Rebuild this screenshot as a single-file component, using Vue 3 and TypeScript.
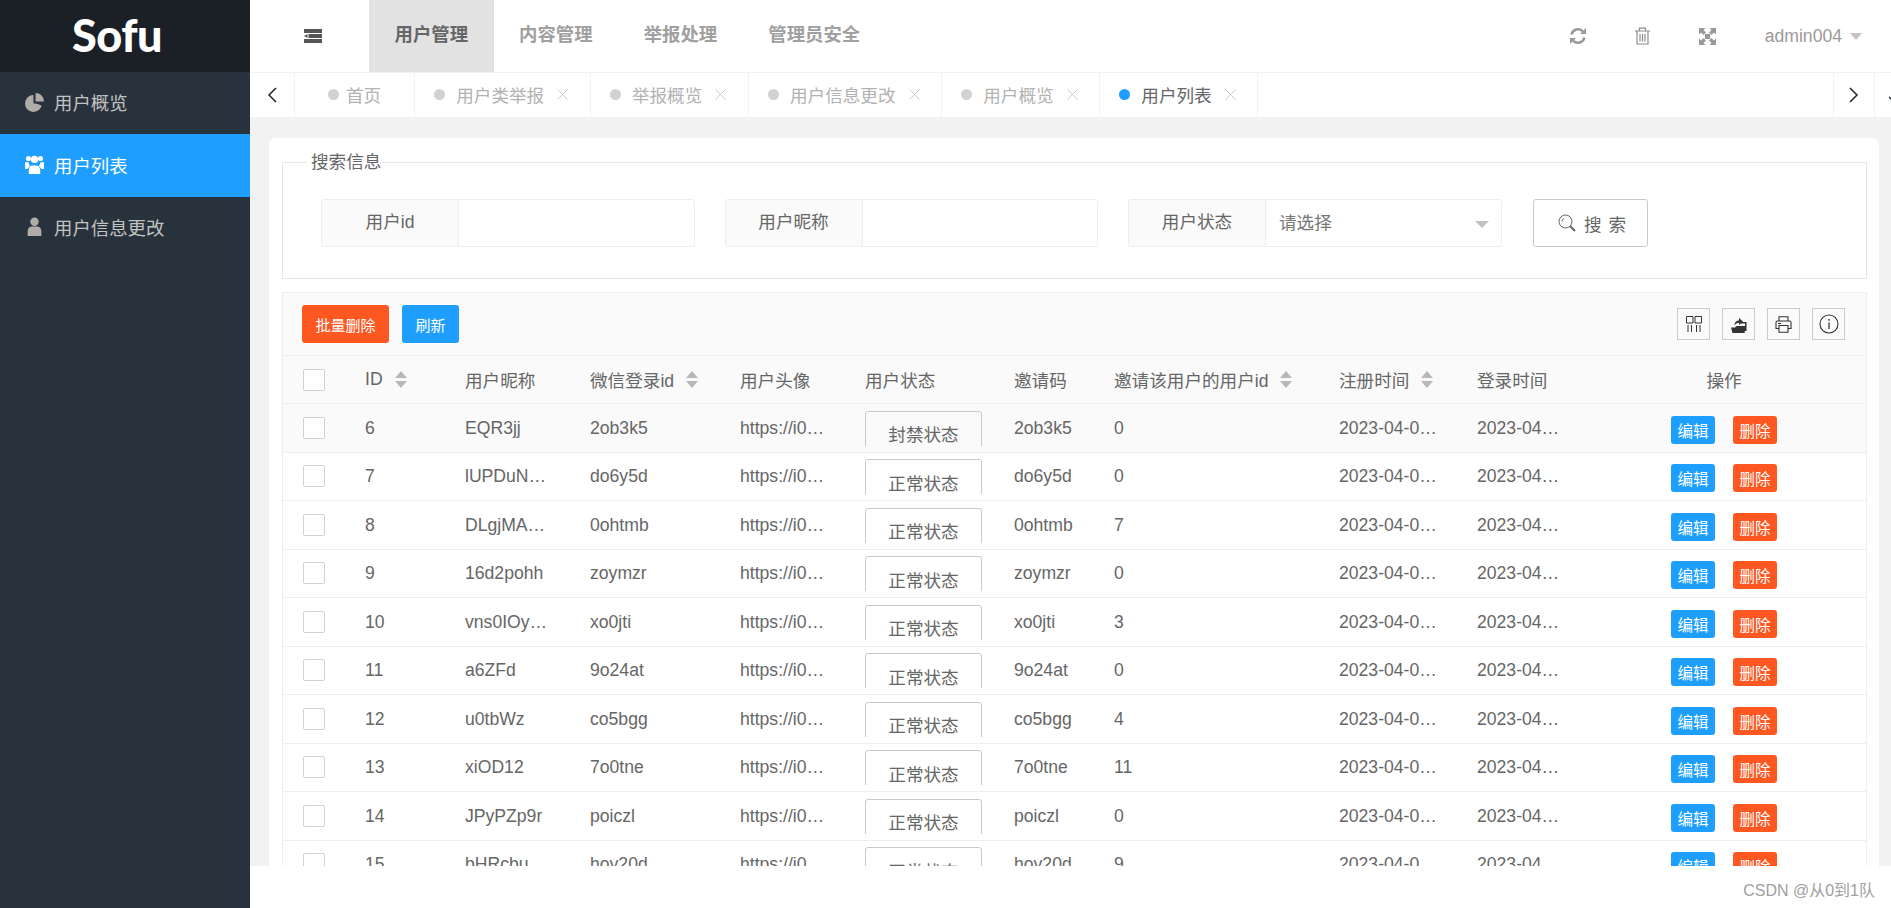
<script setup lang="ts">
interface Row { id: number; nick: string; wx: string; code: string; inviter: string; status: string }
const rows: Row[] = [
  { id: 6, nick: 'EQR3jj', wx: '2ob3k5', code: '2ob3k5', inviter: '0', status: '封禁状态' },
  { id: 7, nick: 'lUPDuNxkQ2', wx: 'do6y5d', code: 'do6y5d', inviter: '0', status: '正常状态' },
  { id: 8, nick: 'DLgjMAz7Rt', wx: '0ohtmb', code: '0ohtmb', inviter: '7', status: '正常状态' },
  { id: 9, nick: '16d2pohh', wx: 'zoymzr', code: 'zoymzr', inviter: '0', status: '正常状态' },
  { id: 10, nick: 'vns0IOyTfa', wx: 'xo0jti', code: 'xo0jti', inviter: '3', status: '正常状态' },
  { id: 11, nick: 'a6ZFd', wx: '9o24at', code: '9o24at', inviter: '0', status: '正常状态' },
  { id: 12, nick: 'u0tbWz', wx: 'co5bgg', code: 'co5bgg', inviter: '4', status: '正常状态' },
  { id: 13, nick: 'xiOD12', wx: '7o0tne', code: '7o0tne', inviter: '11', status: '正常状态' },
  { id: 14, nick: 'JPyPZp9r', wx: 'poiczl', code: 'poiczl', inviter: '0', status: '正常状态' },
  { id: 15, nick: 'bHRcbu', wx: 'hoy20d', code: 'hoy20d', inviter: '9', status: '正常状态' }
]
const navs = ['用户管理', '内容管理', '举报处理', '管理员安全']
const tabs = ['用户类举报', '举报概览', '用户信息更改', '用户概览', '用户列表']
const avatar = 'https://i0.hdslb.com/bfs/face/member.jpg'
const stamp = '2023-04-01 12:30:45'
</script>

<template>
  <div class="app">
    <aside class="side">
      <div class="logo">Sofu</div>
      <nav class="menu">
        <a class="item">
          <svg class="mi" viewBox="0 0 18 18"><path d="M8 2a8 8 0 1 0 8 8H8z" /><path d="M10 0a8 8 0 0 1 8 8h-8z" /><path d="M9.500 9.500h7.500l-.6 2.600z" fill="#28323d" /></svg>
          用户概览
        </a>
        <a class="item active">
          <svg class="mi" viewBox="0 0 18 18"><circle cx="3.300" cy="3.400" r="2.400" /><circle cx="14.700" cy="3.400" r="2.400" /><circle cx="9" cy="4.200" r="3.400" /><path d="M0 6.800h3.400c.1 1.700.7 2.900 1.800 3.800-1.400.6-2.200 1.500-2.600 2.600H0zM18 6.800h-3.400c-.1 1.700-.7 2.900-1.800 3.800 1.400.6 2.200 1.500 2.600 2.600H18z" /><path d="M3.600 18v-3.400C3.600 12 5.400 10 7 10h4c1.600 0 3.400 2 3.400 4.600V18z" /></svg>
          用户列表
        </a>
        <a class="item">
          <svg class="mi" viewBox="0 0 18 18"><circle cx="9" cy="4.500" r="4" /><path d="M2.500 18v-4.500C2.500 10.800 4.500 9 6 9h6c1.500 0 3.500 1.800 3.500 4.500V18z" /></svg>
          用户信息更改
        </a>
      </nav>
    </aside>

    <div class="main">
      <header class="top">
        <div class="toggle">
          <svg width="18" height="14" viewBox="0 0 18 14" fill="#555"><path d="M0 0h18v4H0zM0 10h18v4H0zM4.500 5h13.500v4H4.500zM0 7l3.500-2v4z" /></svg>
        </div>
        <a v-for="(n, i) in navs" :key="n" class="nav" :class="{ on: i === 0 }">{{ n }}</a>
        <div class="tools">
          <span class="tool">
            <svg width="18" height="18" viewBox="0 0 18 18" fill="none" stroke="#999" stroke-width="2.600"><path d="M2.500 7.500A6.800 6.800 0 0 1 14 4.300" /><path d="M15.500 10.500A6.800 6.800 0 0 1 4 13.700" /><path d="M17 1v6h-6z" fill="#999" stroke="none" /><path d="M1 17v-6h6z" fill="#999" stroke="none" /></svg>
          </span>
          <span class="tool">
            <svg width="15" height="18" viewBox="0 0 15 18" fill="none" stroke="#8e8e8e" stroke-width="1.200"><path d="M0 4h15M4.500 4V1.200h6V4M2 4v13h11V4M5 7v7.500M7.500 7v7.500M10 7v7.500" /></svg>
          </span>
          <span class="tool">
            <svg width="17" height="17" viewBox="0 0 17 17" fill="#999"><path d="M0 0h6.500L4.500 2 7 4.500 4.500 7 2 4.500 0 6.500zM17 0v6.500l-2-2L12.500 7 10 4.500 12.500 2l-2-2zM0 17v-6.500l2 2L4.500 10 7 12.500 4.500 15l2 2zM17 17h-6.500l2-2L10 12.500l2.500-2.500 2.500 2.500 2-2z" /><path d="M6 6h5v5H6z" /></svg>
          </span>
          <span class="user">admin004<i class="caret" /></span>
        </div>
      </header>

      <div class="tabs">
        <button class="arrow">
          <svg width="10" height="16" viewBox="0 0 10 16" fill="none" stroke="#1c2530" stroke-width="1.500"><path d="M9 1 2 8l7 7" /></svg>
        </button>
        <div class="strip">
          <div class="tab home"><i class="dot" /><span>首页</span></div>
          <div v-for="(t, i) in tabs" :key="t" class="tab" :class="{ cur: i === tabs.length - 1 }">
            <i class="dot" /><span>{{ t }}</span>
            <svg class="close" width="11" height="11" viewBox="0 0 11 11" stroke="#c9c9c9" stroke-width="1"><path d="M.5.5l10 10M10.500.5l-10 10" /></svg>
          </div>
        </div>
        <button class="arrow right">
          <svg width="10" height="16" viewBox="0 0 10 16" fill="none" stroke="#1c2530" stroke-width="1.500"><path d="M1 1l7 7-7 7" /></svg>
        </button>
        <div class="more">
          <svg width="10" height="8" viewBox="0 0 10 8" fill="none" stroke="#1c2530" stroke-width="1.500"><path d="M0 1l5 5 5-5" /></svg>
        </div>
      </div>

      <div class="body">
        <section class="card">
          <fieldset class="search">
            <legend>搜索信息</legend>
            <div class="form">
              <div class="group"><label>用户id</label><div class="field" /></div>
              <div class="group"><label>用户昵称</label><div class="field" /></div>
              <div class="group">
                <label>用户状态</label>
                <div class="field select">请选择<i class="sel-caret" /></div>
              </div>
              <button class="go">
                <svg width="18" height="18" viewBox="0 0 18 18" fill="none" stroke="#666" stroke-width="1"><circle cx="7.500" cy="7.500" r="6.500" /><path d="M4 7.500a3.500 3.500 0 0 1 2-3.200" /><path d="M12 12l5 5" stroke-width="2" /></svg>
                <span>搜 索</span>
              </button>
            </div>
          </fieldset>

          <div class="table">
            <div class="bar">
              <button class="btn red big">批量删除</button>
              <button class="btn blue big">刷新</button>
              <div class="bar-tools">
                <span class="ib">
                  <svg width="16" height="16" viewBox="0 0 16 16" fill="none" stroke="#333" stroke-width="1"><path d="M.5.5h6.500v6.500H.5zM9 .5h6.500v6.500H9zM2 9v7M5.500 9v7M10.500 9v7M14 9v7" /></svg>
                </span>
                <span class="ib">
                  <svg width="16" height="17" viewBox="0 0 16 17" fill="#333"><path d="M0 11.500h4l1.500-1.500H15l-1.500 7H1.500z" /><path d="M9 6h6.500v9H14V7.500H9z" /><path d="M3.500 9.500C3.500 6 5.500 4.500 8 4.500V2l4 3.500-4 3.500V6.700c-2 0-3.300.8-4.500 2.800z" /></svg>
                </span>
                <span class="ib">
                  <svg width="17" height="17" viewBox="0 0 17 17" fill="none" stroke="#333" stroke-width="1.100"><path d="M4 5V.8h9V5M4 12.500H1V6.500q0-1.500 1.500-1.500h12q1.500 0 1.500 1.500v6h-3" /><path d="M4 9.500h9v6.700H4z" /><path d="M3 7.500h3" /></svg>
                </span>
                <span class="ib">
                  <svg width="20" height="20" viewBox="0 0 20 20" fill="none" stroke="#333" stroke-width="1.100"><circle cx="10" cy="10" r="9" /><path d="M10 8.500V15" stroke-width="1.300" /><circle cx="10" cy="5.800" r=".9" fill="#333" stroke="none" /></svg>
                </span>
              </div>
            </div>

            <div class="row head">
              <div class="c chk"><i class="box" /></div>
              <div class="c">ID<i class="sort" /></div>
              <div class="c">用户昵称</div>
              <div class="c">微信登录id<i class="sort" /></div>
              <div class="c">用户头像</div>
              <div class="c">用户状态</div>
              <div class="c">邀请码</div>
              <div class="c">邀请该用户的用户id<i class="sort" /></div>
              <div class="c">注册时间<i class="sort" /></div>
              <div class="c">登录时间</div>
              <div class="c ops">操作</div>
            </div>

            <div v-for="(r, i) in rows" :key="r.id" class="row" :class="{ hover: i === 0 }">
              <div class="c chk"><i class="box" /></div>
              <div class="c">{{ r.id }}</div>
              <div class="c"><span class="t w-nick">{{ r.nick }}</span></div>
              <div class="c">{{ r.wx }}</div>
              <div class="c"><span class="t w-url">{{ avatar }}</span></div>
              <div class="c stat"><div class="clip"><button class="state">{{ r.status }}</button></div></div>
              <div class="c">{{ r.code }}</div>
              <div class="c">{{ r.inviter }}</div>
              <div class="c"><span class="t w-reg">{{ stamp }}</span></div>
              <div class="c"><span class="t w-log">{{ stamp }}</span></div>
              <div class="c ops">
                <button class="btn blue small">编辑</button>
                <button class="btn red small">删除</button>
              </div>
            </div>
          </div>
        </section>
      </div>

      <footer class="foot">CSDN @从0到1队</footer>
    </div>
  </div>
</template>

<style>
html, body { margin: 0; background: #fff; }
</style>

<style scoped>
.app {
  display: flex;
  height: 908px;
  overflow: hidden;
  font-family: "Liberation Sans", "Noto Sans CJK SC", sans-serif;
  font-size: 17.6px;
  color: #666;
}
button { font-family: inherit; cursor: pointer; }
i { font-style: normal; display: block; }

.side { width: 250px; flex: none; background: #28323d; }
.logo {
  height: 72px;
  padding-left: 72px;
  box-sizing: border-box;
  background: #1b2027;
  color: #fff;
  font-family: Lato, sans-serif;
  font-weight: 900;
  font-size: 45px;
  letter-spacing: -0.5px;
  line-height: 70px;
}
.item {
  display: flex;
  align-items: center;
  height: 62.4px;
  box-sizing: border-box;
  padding: 0 0 2px 25px;
  color: #c2c2c2;
  font-size: 18.4px;
}
.item.active { background: #1e9fff; color: #fff; }
.mi { width: 19px; height: 19px; margin-right: 10px; fill: #b0aca8; flex: none; }
.active .mi { fill: #fff; }

.main { flex: 1; min-width: 0; display: flex; flex-direction: column; }
.top {
  height: 73px;
  box-sizing: border-box;
  display: flex;
  border-bottom: 1px solid #f2f2f2;
  flex: none;
}
.toggle { width: 119px; display: flex; align-items: center; justify-content: center; padding-left: 6px; box-sizing: border-box; }
.nav {
  padding: 0 25.5px;
  line-height: 69px;
  font-size: 18.4px;
  font-weight: 700;
  color: #a0a0a0;
}
.nav.on { background: #e2e2e2; color: #666; }
.tools { margin-left: auto; display: flex; align-items: center; padding-right: 29px; }
.tool { width: 64.5px; display: flex; justify-content: center; }
.user { display: flex; align-items: center; margin-left: 25px; color: #999; }
.caret { margin-left: 8px; border: 6.5px solid transparent; border-top: 7px solid #c2c2c2; border-bottom: 0; }

.tabs { height: 44px; flex: none; display: flex; background: #fff; }
.arrow {
  width: 45px;
  flex: none;
  padding: 0;
  border: 0;
  border-right: 1px solid #f2f2f2;
  background: #fff;
  display: flex;
  align-items: center;
  justify-content: center;
}
.arrow.right { width: 42px; border-right: 1px solid #f2f2f2; border-left: 1px solid #f2f2f2; }
.strip { flex: 1; display: flex; min-width: 0; }
.tab {
  display: flex;
  align-items: center;
  padding: 0 21.7px 2px 19px;
  border-right: 1px solid #f2f2f2;
  color: #b2b2b2;
}
.tab.home { padding: 0 33px 2px; }
.tab.home .dot { margin-right: 7px; }
.dot { width: 11px; height: 11px; border-radius: 50%; background: #d2d2d2; margin-right: 11px; flex: none; }
.cur { color: #666; }
.cur .dot { background: #1e9fff; }
.close { margin-left: 13px; flex: none; }
.more { width: 16px; flex: none; overflow: hidden; padding: 15px 0 0 14px; box-sizing: border-box; }

.body { flex: 1; min-height: 0; background: #f2f2f2; padding: 21px 12px 0 19px; overflow: hidden; }
.card { background: #fff; border-radius: 6px 6px 0 0; padding: 12px 12px 0 13px; }

.search {
  margin: 0;
  padding: 25px 0 31px;
  border: 1px solid #e6e6e6;
  min-width: 0;
}
legend { margin-left: 24px; padding: 0 1px 0 4px; line-height: 24px; color: #666; }
.form { display: flex; padding-left: 38px; }
.group { width: 373.5px; height: 48px; display: flex; margin-right: 30px; flex: none; box-sizing: border-box; border: 1px solid #eee; border-radius: 3px; }
.group:nth-child(3) { margin-right: 31px; }
.group label {
  width: 136px;
  flex: none;
  background: #fafafa;
  border-right: 1px solid #eee;
  text-align: center;
  line-height: 45px;
  border-radius: 3px 0 0 3px;
}
.field { flex: 1; }
.select { display: flex; align-items: center; padding-left: 13px; position: relative; color: #777; line-height: 44px; }
.sel-caret { position: absolute; right: 12px; top: 21px; border: 7px solid transparent; border-top: 7px solid #c2c2c2; border-bottom: 0; }
.go {
  width: 115px;
  height: 48px;
  display: flex;
  align-items: center;
  justify-content: center;
  gap: 8px;
  background: #fff;
  border: 1px solid #c9c9c9;
  border-radius: 3px;
  color: #666;
  font-size: 17.6px;
  padding: 0 0 0 5px;
  box-sizing: border-box;
}
.go span { letter-spacing: 1px; }

.table { margin-top: 13px; border: 1px solid #eee; border-bottom: 0; }
.bar {
  height: 62px;
  background: #fafafa;
  border-bottom: 1px solid #eee;
  display: flex;
  align-items: center;
  padding: 0 21px 0 19px;
}
.bar-tools { margin-left: auto; display: flex; gap: 12px; }
.ib {
  width: 33px;
  height: 32px;
  box-sizing: border-box;
  border: 1px solid #ccc;
  display: flex;
  align-items: center;
  justify-content: center;
}
.btn { border: 0; color: #fff; border-radius: 3px; padding: 0; }
.red { background: #ff5722; }
.blue { background: #1e9fff; }
.big { height: 38px; font-size: 15px; margin-right: 13px; padding: 0 13.5px; }
.small { width: 44px; height: 28px; font-size: 15.5px; margin-top: 3px; }

.row {
  display: grid;
  grid-template-columns: 71px 100px 125px 150px 125px 149px 100px 225px 138px 116px 1fr;
  height: 48.5px;
  box-sizing: border-box;
  border-bottom: 1px solid #eee;
}
.head { height: 48px; background: #fafafa; }
.hover { background: #fafafa; }
.c {
  padding: 1px 0 0 11px;
  display: flex;
  align-items: center;
  min-width: 0;
  white-space: nowrap;
}
.head .c { padding-top: 0; }
.chk, .head .chk { padding: 0 0 0 20px; }
.box { width: 22px; height: 22px; box-sizing: border-box; border: 1px solid #d2d2d2; border-radius: 2px; background: #fff; }
.t { overflow: hidden; text-overflow: ellipsis; display: block; }
.w-nick { width: 83px; }
.w-url { width: 88px; }
.w-reg { width: 106px; }
.w-log { width: 85px; }
.sort {
  position: relative;
  width: 12px;
  height: 17px;
  margin-left: 12px;
  flex: none;
}
.sort::before, .sort::after {
  content: "";
  position: absolute;
  left: 0;
  border: 6px solid transparent;
}
.sort::before { top: 0; border-top: 0; border-bottom: 7px solid #b8b8b8; }
.sort::after { bottom: 0; border-bottom: 0; border-top: 7px solid #b8b8b8; }
.stat { align-items: flex-start; padding-top: 6.5px; }
.clip { height: 35px; overflow: hidden; }
.state {
  width: 117px;
  height: 48px;
  background: #fff;
  border: 1px solid #c9c9c9;
  border-radius: 3px;
  color: #666;
  font-size: 17.6px;
  padding: 0 0 2px;
}
.hover .state { background: #fafafa; }
.ops { justify-content: center; padding-left: 0; gap: 18px; }
.foot {
  height: 42px;
  flex: none;
  background: #fff;
  box-sizing: border-box;
  padding: 15px 16px 0 0;
  text-align: right;
  color: #a0a0a0;
  font-size: 16px;
  line-height: 20px;
}
</style>
